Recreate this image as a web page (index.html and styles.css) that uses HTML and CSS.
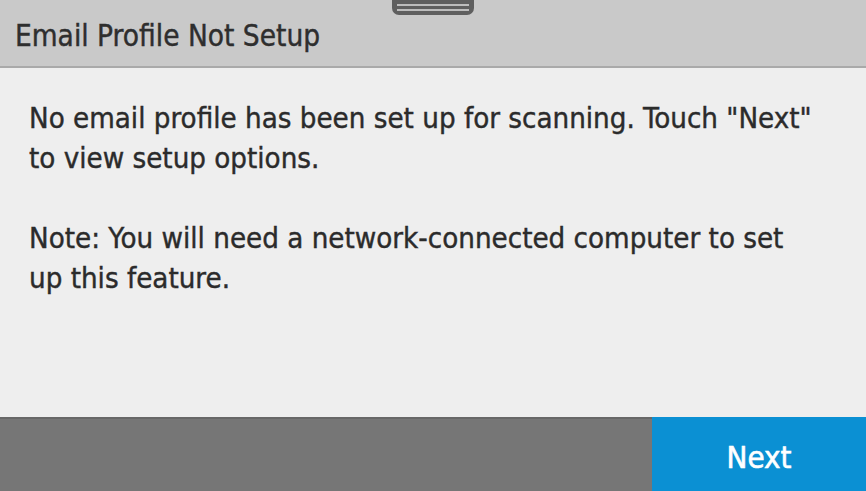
FILE: index.html
```html
<!DOCTYPE html>
<html lang="en">
<head>
    <meta charset="UTF-8">
    <title>Email Profile Not Setup</title>
    <link rel="stylesheet" href="styles.css">
</head>
<body>
    <div class="screen">
        <div class="header">
            <div class="handle"><span></span><span></span></div>
            <h1>Email Profile Not Setup</h1>
        </div>

        <div class="content">
            <p>No email profile has been set up for scanning. Touch "Next" to view setup options.</p>
            <p>Note: You will need a network-connected computer to set up this feature.</p>
        </div>

        <div class="footer">
            <div class="spacer"></div>
            <button class="next">Next</button>
        </div>
    </div>
</body>
</html>
```

FILE: styles.css
```css
body {
    margin: 0;
    font-family: 'DejaVu Sans Condensed', 'DejaVu Sans', sans-serif;
    background: #eeeeee;
}
.screen {
    width: 866px;
    height: 491px;
    display: flex;
    flex-direction: column;
    overflow: hidden;
}
.header {
    position: relative;
    height: 66px;
    background: #c9c9c9;
    border-bottom: 2px solid #a9a9a9;
    display: flex;
    align-items: flex-end;
}
.header h1 {
    margin: 0 0 13px 15px;
    font-size: 29.5px;
    font-weight: normal;
    color: #2e2e2e;
    -webkit-text-stroke: 0.4px #2e2e2e;
}
.handle {
    position: absolute;
    top: -4px;
    left: 392px;
    width: 82px;
    height: 19px;
    background: #5f5f5f;
    border-radius: 0 0 7px 7px;
    display: flex;
    flex-direction: column;
    justify-content: flex-end;
    gap: 3px;
    padding: 0 5px 4px;
    box-sizing: border-box;
}
.handle span {
    height: 2px;
    background: #bdbdbd;
}
.content {
    flex: 1;
    padding: 30px 47px 0 29px;
    color: #2b2b2b;
}
.content p {
    margin: 0 0 40px;
    font-size: 29.2px;
    line-height: 40px;
    -webkit-text-stroke: 0.4px #2b2b2b;
}
.footer {
    height: 72px;
    display: flex;
    background: #767676;
    border-top: 2px solid #676767;
}
.spacer {
    flex: 1;
}
.next {
    width: 214px;
    background: #0b90d3;
    color: white;
    border: none;
    font-family: inherit;
    font-size: 31px;
    font-weight: normal;
    -webkit-text-stroke: 0.6px white;
    padding: 6px 0 0;
    margin-top: -2px;
}
```
